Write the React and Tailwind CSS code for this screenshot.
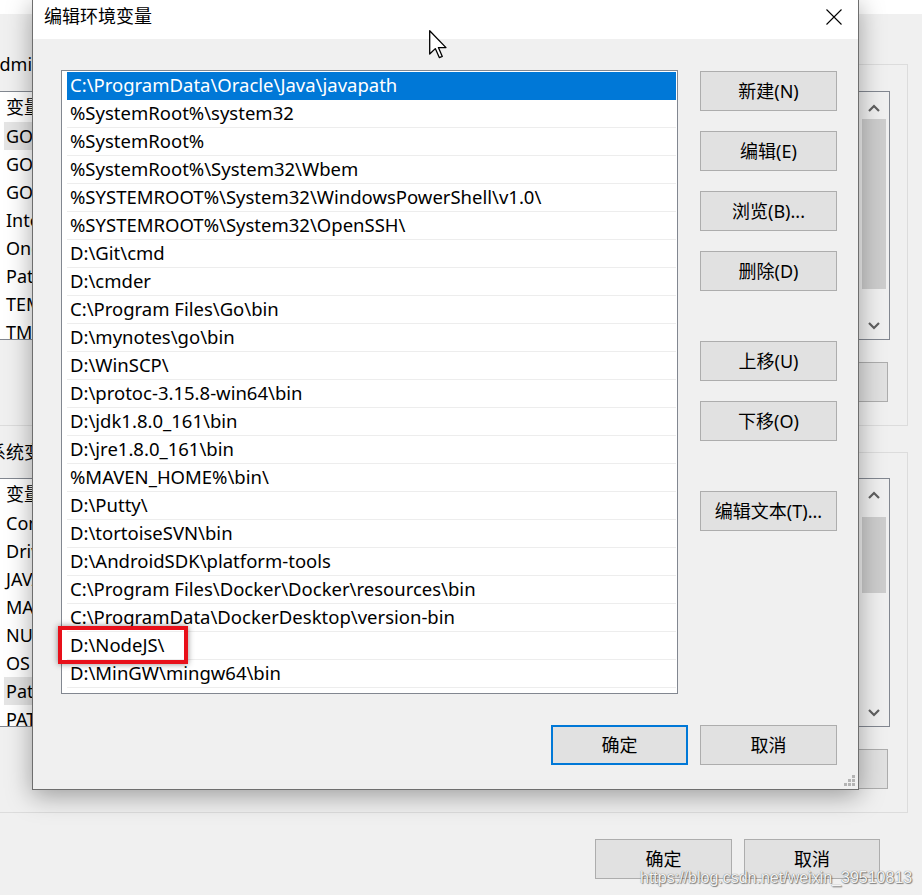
import React from "react";

// entries of the Path variable shown in the dialog
const pathItems = [
  "C:\\ProgramData\\Oracle\\Java\\javapath",
  "%SystemRoot%\\system32",
  "%SystemRoot%",
  "%SystemRoot%\\System32\\Wbem",
  "%SYSTEMROOT%\\System32\\WindowsPowerShell\\v1.0\\",
  "%SYSTEMROOT%\\System32\\OpenSSH\\",
  "D:\\Git\\cmd",
  "D:\\cmder",
  "C:\\Program Files\\Go\\bin",
  "D:\\mynotes\\go\\bin",
  "D:\\WinSCP\\",
  "D:\\protoc-3.15.8-win64\\bin",
  "D:\\jdk1.8.0_161\\bin",
  "D:\\jre1.8.0_161\\bin",
  "%MAVEN_HOME%\\bin\\",
  "D:\\Putty\\",
  "D:\\tortoiseSVN\\bin",
  "D:\\AndroidSDK\\platform-tools",
  "C:\\Program Files\\Docker\\Docker\\resources\\bin",
  "C:\\ProgramData\\DockerDesktop\\version-bin",
  "D:\\NodeJS\\",
  "D:\\MinGW\\mingw64\\bin",
];

const userVars = ["GOBIN", "GOPATH", "GOPROXY", "IntelliJ IDEA", "OneDrive", "Path", "TEMP", "TMP"];
const systemVars = ["ComSpec", "DriverData", "JAVA_HOME", "MAVEN_HOME", "NUMBER_OF_PROCESSORS", "OS", "Path", "PATHEXT"];

function Chevron({ up }) {
  return (
    <svg width="12" height="8" viewBox="0 0 12 8">
      <path d={up ? "M1 7 L6 2 L11 7" : "M1 1 L6 6 L11 1"} fill="none" stroke="#606060" strokeWidth="2.2" />
    </svg>
  );
}

// scrollbar of the lists in the window behind the dialog
function BgScrollbar({ thumbOffset, thumbHeight }) {
  return (
    <div className="flex w-[30px] flex-col bg-[#f0f0f0]">
      <div className="flex h-[27px] items-end justify-center pb-[7px]">
        <Chevron up />
      </div>
      <div className="flex-1" style={{ paddingTop: thumbOffset }}>
        <div className="ml-[3px] w-[24px] bg-[#cdcdcd]" style={{ height: thumbHeight }} />
      </div>
      <div className="flex h-[27px] items-center justify-center">
        <Chevron />
      </div>
    </div>
  );
}

function BgList({ rows, selected, thumbOffset, thumbHeight }) {
  return (
    <div className="flex h-[249px] border border-[#828790] bg-white">
      <div className="flex-1 overflow-hidden pl-[4px]">
        <div className="flex h-[30px] items-center pl-[2px] text-[18px]">变量</div>
        {rows.map((r, i) => (
          <div key={i} className={`flex h-[28px] items-center pl-[2px] text-[18px] ${i === selected ? "bg-[#e5e5e5]" : ""}`}>
            {r}
          </div>
        ))}
      </div>
      <BgScrollbar thumbOffset={thumbOffset} thumbHeight={thumbHeight} />
    </div>
  );
}

function BgButtons() {
  return (
    <div className="mr-[2px] flex justify-end gap-[12px]">
      <button className="h-[40px] w-[136px] border border-[#adadad] bg-[#e1e1e1] text-[18px]">新建(W)...</button>
      <button className="h-[40px] w-[136px] border border-[#adadad] bg-[#e1e1e1] text-[18px]">编辑(I)...</button>
      <button className="h-[40px] w-[136px] border border-[#adadad] bg-[#e1e1e1] text-[18px]">删除(L)</button>
    </div>
  );
}

function Btn({ children, primary }) {
  return (
    <button
      className={`flex h-[40px] w-[137px] items-center justify-center bg-[#e1e1e1] text-[18px] text-black ${
        primary ? "border-2 border-[#0078d7]" : "border border-[#adadad]"
      }`}
    >
      {children}
    </button>
  );
}

export default function App() {
  return (
    <div className="relative h-[895px] w-[922px] overflow-hidden bg-[#f0f0f0] font-['Segoe_UI','Noto_Sans','Noto_Sans_CJK_SC',sans-serif] text-black">
      {/* window behind the dialog */}
      <div className="h-[14px] bg-white" />
      <div className="pr-[14px]">
        <div className="relative ml-[-20px] mt-[50px] border border-[#dcdcdc] pb-[23px] pl-[18px] pr-[17px] pt-[26px]">
          <span className="absolute left-[7px] top-[-15px] bg-[#f0f0f0] text-[18px] leading-[28px]">Administrator 的用户变量(U)</span>
          <BgList rows={userVars} selected={0} thumbOffset={0} thumbHeight={170} />
          <div className="mt-[22px]">
            <BgButtons />
          </div>
        </div>
        <div className="relative ml-[-20px] mt-[26px] border border-[#dcdcdc] pb-[23px] pl-[18px] pr-[17px] pt-[25px]">
          <span className="absolute left-[7px] top-[-15px] bg-[#f0f0f0] text-[18px] leading-[28px]">系统变量(S)</span>
          <BgList rows={systemVars} selected={6} thumbOffset={11} thumbHeight={76} />
          <div className="mt-[22px]">
            <BgButtons />
          </div>
        </div>
        <div className="mr-[28px] mt-[26px] flex justify-end gap-[12px]">
          <button className="h-[40px] w-[137px] border border-[#adadad] bg-[#e1e1e1] text-[18px]">确定</button>
          <button className="h-[40px] w-[136px] border border-[#adadad] bg-[#e1e1e1] text-[18px]">取消</button>
        </div>
      </div>

      {/* edit environment variable dialog */}
      <div className="absolute left-[32px] top-[-1px] flex h-[791px] w-[827px] flex-col border border-[#6e6e6e] bg-[#f0f0f0] shadow-[0_6px_24px_rgba(0,0,0,0.35)]">
        <div className="flex h-[39px] items-center justify-between bg-white pb-[6px] pl-[11px] pr-[16px]">
          <span className="text-[18px]">编辑环境变量</span>
          <svg width="16" height="16" viewBox="0 0 16 16">
            <path d="M0.5 0.5 L15.5 15.5 M15.5 0.5 L0.5 15.5" stroke="#000" strokeWidth="1.1" />
          </svg>
        </div>
        <div className="flex flex-1 flex-col pl-[28px] pr-[21px] pt-[31px]">
          <div className="flex gap-[22px]">
            <div className="h-[624px] w-[617px] border border-[#828790] bg-white pl-[5px] pr-[1px] pt-[1px]">
              {pathItems.map((p, i) => (
                <div
                  key={i}
                  className={`relative flex h-[28px] items-center border-b pb-[1px] pl-[3px] text-[18.5px] ${
                    i === 0 ? "border-[#0078d7] bg-[#0078d7] text-white" : "border-[#ededed]"
                  }`}
                >
                  {p}
                  {p === "D:\\NodeJS\\" && (
                    <div className="absolute left-[-9px] top-[-6px] h-[38px] w-[130px] border-4 border-[#e8101a] shadow-[0_0_6px_rgba(0,0,0,0.45)]" />
                  )}
                </div>
              ))}
            </div>
            <div className="mt-[1px] flex flex-col">
              <Btn>新建(N)</Btn>
              <div className="mt-[20px]"><Btn>编辑(E)</Btn></div>
              <div className="mt-[20px]"><Btn>浏览(B)...</Btn></div>
              <div className="mt-[20px]"><Btn>删除(D)</Btn></div>
              <div className="mt-[50px]"><Btn>上移(U)</Btn></div>
              <div className="mt-[20px]"><Btn>下移(O)</Btn></div>
              <div className="mt-[50px]"><Btn>编辑文本(T)...</Btn></div>
            </div>
          </div>
          <div className="mt-[31px] flex justify-end gap-[12px]">
            <Btn primary>确定</Btn>
            <Btn>取消</Btn>
          </div>
        </div>
        {/* resize grip */}
        <svg className="absolute bottom-[2px] right-[2px]" width="12" height="12" viewBox="0 0 12 12" fill="#b4b4b4">
          <rect x="8" y="0" width="3" height="3" />
          <rect x="4" y="4" width="3" height="3" />
          <rect x="8" y="4" width="3" height="3" />
          <rect x="0" y="8" width="3" height="3" />
          <rect x="4" y="8" width="3" height="3" />
          <rect x="8" y="8" width="3" height="3" />
        </svg>
      </div>

      {/* mouse pointer */}
      <svg className="absolute left-[429px] top-[30px]" width="20" height="30" viewBox="0 0 20 30">
        <path d="M0.7 0.7 L0.7 24 L6.3 18.6 L10.3 27.6 L13.3 26.4 L9.4 17.6 L17 17.6 Z" fill="#fff" stroke="#000" strokeWidth="1.3" strokeLinejoin="round" />
      </svg>

      {/* watermark */}
      <div className="absolute left-[640px] top-[866px] font-['Liberation_Sans',sans-serif] text-[16px] text-[#f4f4f4] [text-shadow:0_0_1px_#555,1px_1px_1px_rgba(0,0,0,0.45)]">
        https://blog.csdn.net/weixin_39510813
      </div>
    </div>
  );
}
